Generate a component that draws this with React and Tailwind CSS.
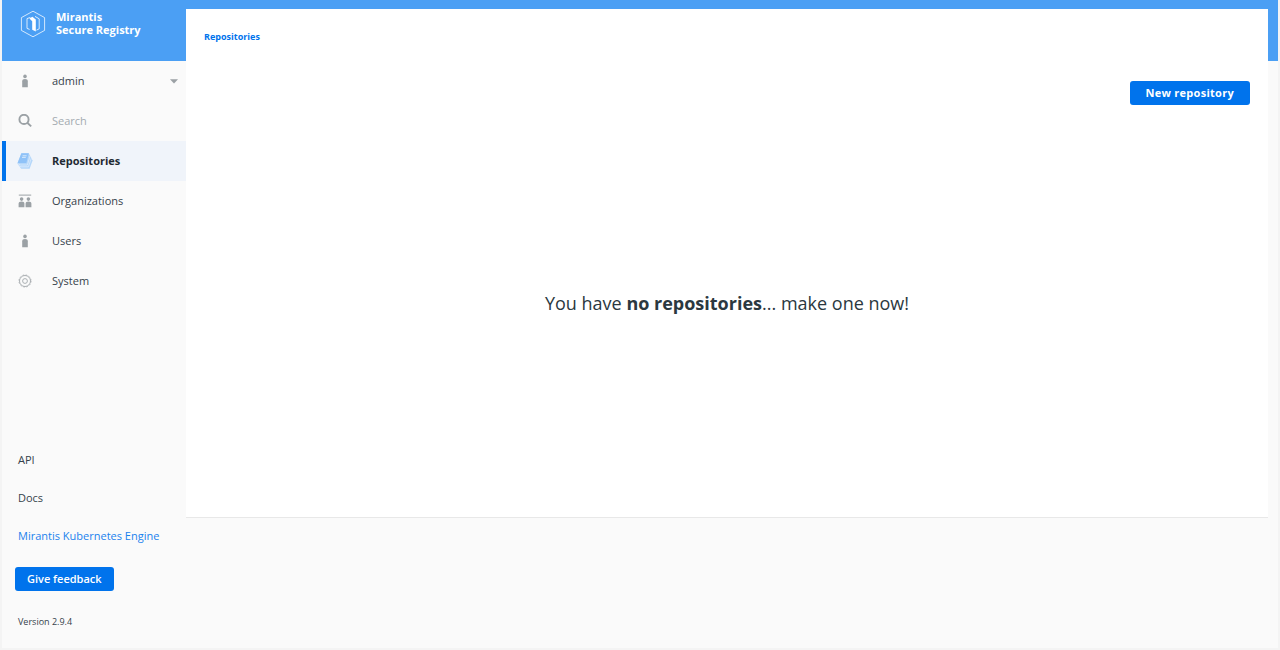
import clsx from "clsx";

function LogoIcon() {
    return (
        <svg viewBox="0 0 26 28" className="w-[26px] h-7 shrink-0" fill="none" stroke="#fff" aria-hidden="true">
            <path d="M13 1.2 L24.6 7.6 V20.4 L13 26.8 L1.4 20.4 V7.6 Z" strokeWidth="1" opacity=".75" />
            <path d="M9.6 19.4 L7 18.4 V8.6 L10.4 7.4 M15 6.4 L19.2 8.8 V18.8 L16.4 20.2" strokeWidth="1" opacity=".8" />
            <path d="M9.4 8.4 L12.4 6.8 L15.8 9.4 V21.4 L12.2 19.8 V11.2 Z" fill="#fff" stroke="none" />
        </svg>
    );
}

function PersonIcon() {
    return (
        <svg viewBox="0 0 14 14" className="size-[14px]" fill="#9ba1a5" aria-hidden="true">
            <circle cx="7" cy="2.4" r="1.8" />
            <path d="M4.2 7.2 Q4.2 4.9 7 4.9 Q9.8 4.9 9.8 7.2 V13.2 H4.2 Z" />
        </svg>
    );
}

function SearchIcon() {
    return (
        <svg viewBox="0 0 14 14" className="size-[14px]" fill="none" stroke="#9ba1a5" strokeWidth="1.9" aria-hidden="true">
            <circle cx="6" cy="5.4" r="4.6" />
            <path d="M9.3 8.7 L13.2 12.4" />
        </svg>
    );
}

function RepositoriesIcon() {
    return (
        <svg viewBox="0 0 16 16" className="size-4" aria-hidden="true">
            <path d="M4.4 .3 H11.8 L15.6 7.4 L12.6 15.7 H4.2 L.4 10.6 Z" fill="#b5d7fa" />
            <path d="M4.4 .3 H11.8 L9.4 10 H.6 Z" fill="#8fc2f8" />
            <path d="M5.6 2.8 H9.6 M5 4.4 H8.8" stroke="#e8f2fd" strokeWidth=".8" />
            <path
                d="M.8 10.8 L3.6 12 H10.4 L13 3 M2 12.8 L4 13.8 H11.4 L14.3 5.4"
                fill="none"
                stroke="#e8f2fd"
                strokeWidth=".6"
            />
        </svg>
    );
}

function OrganizationsIcon() {
    return (
        <svg viewBox="0 0 14 14" className="size-[14px]" fill="#9ba1a5" aria-hidden="true">
            <path d="M.8 .6 H13.2 V1.6 H.8 Z" />
            <circle cx="3.6" cy="5.1" r="1.8" />
            <circle cx="10.4" cy="5.1" r="1.8" />
            <path d="M.6 13.2 V9.6 Q.6 7.5 3.6 7.5 Q6.4 7.5 6.4 9.6 V13.2 Z M7.6 13.2 V9.6 Q7.6 7.5 10.4 7.5 Q13.4 7.5 13.4 9.6 V13.2 Z" />
        </svg>
    );
}

function SystemIcon() {
    return (
        <svg viewBox="0 0 14 14" className="size-[14px]" fill="none" stroke="#a3a8ac" aria-hidden="true">
            <circle cx="7" cy="7" r="5.5" strokeWidth=".9" />
            <circle cx="7" cy="7" r="6.1" strokeWidth=".7" strokeDasharray="1.6 1.59" />
            <circle cx="7" cy="7" r="2.4" strokeWidth=".9" />
        </svg>
    );
}

const navItems = [
    { label: "Repositories", icon: RepositoriesIcon, active: true },
    { label: "Organizations", icon: OrganizationsIcon },
    { label: "Users", icon: PersonIcon },
    { label: "System", icon: SystemIcon },
];

const footerLinks = [
    { label: "API" },
    { label: "Docs" },
    { label: "Mirantis Kubernetes Engine", external: true },
];

function Sidebar() {
    return (
        <aside className="w-[184px] shrink-0 flex flex-col">
            {/* Brand */}
            <div className="h-[61px] flex items-start gap-[10px] pl-[18px] pt-[10px] text-white">
                <LogoIcon />
                <p className="text-[11px] leading-[13px] font-bold">
                    Mirantis
                    <br />
                    Secure Registry
                </p>
            </div>

            {/* Account */}
            <button type="button" className="h-10 flex items-center pl-1 pr-2 text-left">
                <span className="w-[38px] flex justify-center">
                    <PersonIcon />
                </span>
                <span className="flex-1 ml-2">admin</span>
                <svg viewBox="0 0 8 5" className="w-2 h-[5px]" fill="#9ba1a5" aria-hidden="true">
                    <path d="M0 .3 H8 L4 4.6 Z" />
                </svg>
            </button>

            <label className="h-10 flex items-center pl-1">
                <span className="w-[38px] flex justify-center">
                    <SearchIcon />
                </span>
                <input
                    type="search"
                    placeholder="Search"
                    aria-label="Search"
                    className="min-w-0 flex-1 ml-2 bg-transparent outline-none placeholder:text-[#a4abb1]"
                />
            </label>

            <nav>
                {navItems.map(({ label, icon: Icon, active }) => (
                    <a
                        key={label}
                        href="#"
                        className={clsx(
                            "h-10 flex items-center border-l-4",
                            active ? "border-[#0073ec] bg-[#f0f4fa] font-bold text-[#1f2a33]" : "border-transparent"
                        )}
                    >
                        <span className="w-[38px] flex justify-center">
                            <Icon />
                        </span>
                        <span className="ml-2">{label}</span>
                    </a>
                ))}
            </nav>

            {/* Footer */}
            <div className="mt-auto pl-4 pb-5 flex flex-col items-start">
                {footerLinks.map((link) => (
                    <a
                        key={link.label}
                        href="#"
                        className={clsx("py-[11px] leading-4 whitespace-nowrap", link.external && "text-[#1a82ee]")}
                    >
                        {link.label}
                    </a>
                ))}
                <button
                    type="button"
                    className="-ml-[3px] mt-3 h-6 px-3 rounded-[3px] bg-[#0073ec] text-white font-semibold"
                >
                    Give feedback
                </button>
                <p className="mt-[25px] text-[9px] leading-3">Version 2.9.4</p>
            </div>
        </aside>
    );
}

export default function App() {
    return (
        <div className="min-h-screen flex border-x-2 border-b-2 border-[#f4f4f4] bg-[linear-gradient(#4b9ff4_61px,#fafafa_61px)] font-['Open_Sans',sans-serif] text-[11px] text-[#36424b]">
            <Sidebar />
            <main className="flex-1 min-w-0 pt-[9px] pr-[10px]">
                <div className="min-h-[509px] flex flex-col bg-white border-b border-[#e8e8e8] px-[18px]">
                    <div className="pt-5 text-[9px] leading-4 font-bold text-[#0073ec]">
                        <a href="#">Repositories</a>
                    </div>
                    <div className="mt-9 flex justify-end">
                        <button
                            type="button"
                            className="h-6 px-4 rounded-[3px] bg-[#0073ec] text-white font-bold tracking-wide"
                        >
                            New repository
                        </button>
                    </div>
                    <p className="flex-1 flex items-center justify-center pb-4 text-[18px] leading-6 text-[#2b3840]">
                        <span>
                            You have <strong>no repositories</strong>... make one now!
                        </span>
                    </p>
                </div>
            </main>
        </div>
    );
}
